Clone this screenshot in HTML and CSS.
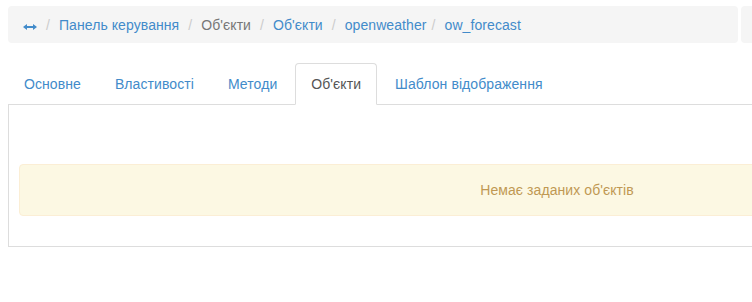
FILE: index.html
```html
<!DOCTYPE html>
<html lang="uk">
<head>
    <meta charset="UTF-8">
    <title>ow_forecast</title>
    <link rel="stylesheet" href="styles.css">
</head>
<body>
    <div class="top-row">
        <ul class="breadcrumb">
            <li>
                <a href="#" class="toggle-icon"><svg width="14" height="6" viewBox="0 0 14 6"><path d="M0 3 L4 0 L4 2 L10 2 L10 0 L14 3 L10 6 L10 4 L4 4 L4 6 Z" fill="#428bca"/></svg></a>
            </li>
            <li><a href="#">Панель керування</a></li>
            <li class="active">Об'єкти</li>
            <li><a href="#">Об'єкти</a></li>
            <li><a href="#">openweather</a></li><li><a href="#">ow_forecast</a></li>
        </ul>
        <div class="side-box"></div>
    </div>

    <div class="tabs-wrap">
        <ul class="nav-tabs">
            <li><a href="#">Основне</a></li>
            <li><a href="#">Властивості</a></li>
            <li><a href="#">Методи</a></li>
            <li class="active"><a href="#">Об'єкти</a></li>
            <li><a href="#">Шаблон відображення</a></li>
        </ul>
        <div class="tab-content">
            <div class="alert">Немає заданих об'єктів</div>
        </div>
    </div>
</body>
</html>
```

FILE: styles.css
```css
html, body {
    overflow: hidden;
}

body {
    margin: 6px 0 0 8px;
    font-family: 'Liberation Sans', Arial, sans-serif;
    font-size: 14px;
    line-height: 20px;
    letter-spacing: 0.08px;
    color: #333;
    background-color: #fff;
}

a {
    color: #428bca;
    text-decoration: none;
}

.top-row {
    display: flex;
    gap: 3px;
    width: 1100px;
}

.breadcrumb {
    width: 700px;
    height: 21px;
    margin: 0 0 20px;
    padding: 9px 15px 7px;
    list-style: none;
    background-color: #f5f5f5;
    border-radius: 4px;
}

.breadcrumb li {
    display: inline-block;
}

.breadcrumb li + li:before {
    content: "/\00a0";
    padding: 0 5px;
    color: #ccc;
}

.breadcrumb .active {
    color: #777;
}

.toggle-icon svg {
    vertical-align: 0;
}

.side-box {
    flex: 1;
    height: 37px;
    background-color: #f5f5f5;
    border-radius: 4px;
}

.tabs-wrap {
    width: 1098px;
}

.nav-tabs {
    display: flex;
    margin: 0;
    padding: 0;
    list-style: none;
    border-bottom: 1px solid #ddd;
}

.nav-tabs li {
    margin-bottom: -1px;
    margin-right: 2px;
}

.nav-tabs a {
    display: block;
    padding: 10px 15px;
    border: 1px solid transparent;
    border-radius: 4px 4px 0 0;
}

.nav-tabs .active a {
    color: #555;
    background-color: #fff;
    border-color: #ddd #ddd transparent;
}

.tab-content {
    padding: 59px 10px 30px;
    border: 1px solid #ddd;
    border-top: none;
}

.alert {
    padding: 15px;
    text-align: center;
    color: #c09853;
    background-color: #fcf8e3;
    border: 1px solid #fbeed5;
    border-radius: 4px;
}
```
